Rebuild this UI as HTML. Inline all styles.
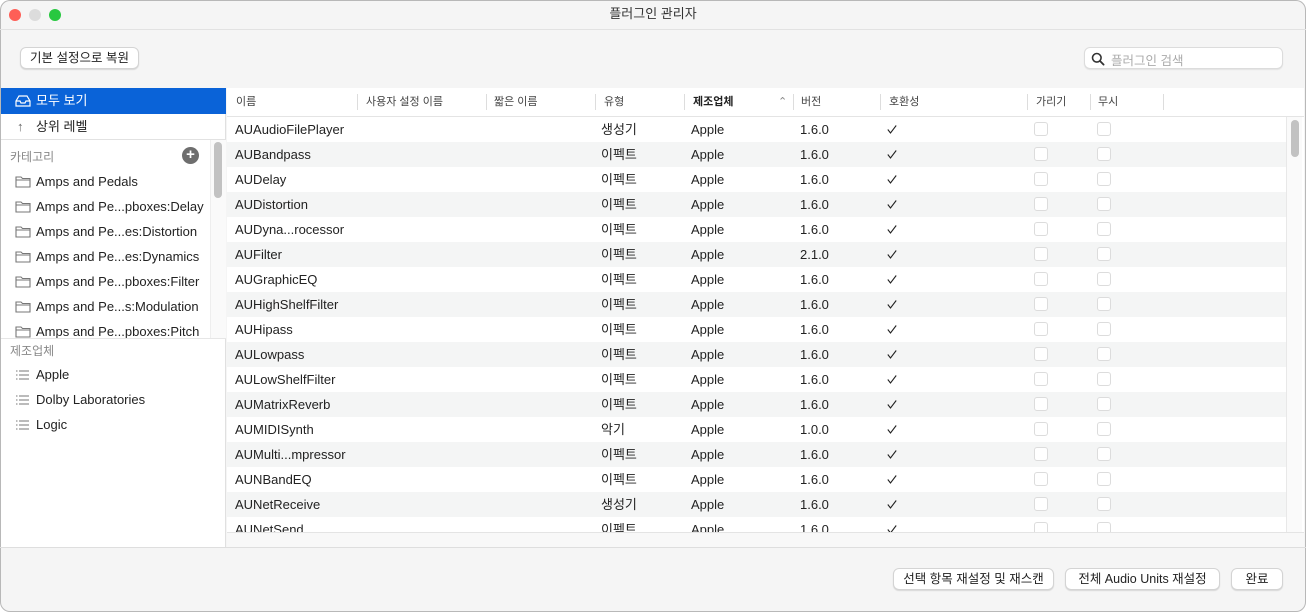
<!DOCTYPE html>
<html><head><meta charset="utf-8"><style>
*{box-sizing:border-box;margin:0;padding:0}
body{width:1306px;height:612px;background:#fff;font-family:"Liberation Sans","Noto Sans CJK KR",sans-serif;font-size:13px;color:#222;overflow:hidden;position:relative}
.win{position:absolute;left:0;top:0;width:1306px;height:612px;box-shadow:inset 0 0 0 1px #b8b8b8;border-radius:10px;background:#f5f5f5;overflow:hidden}
.abs{position:absolute}
.tl{position:absolute;top:9px;width:12px;height:12px;border-radius:50%}
.btn{position:absolute;background:#fff;border:1px solid #d4d4d4;border-radius:6px;box-shadow:0 1px 1px rgba(0,0,0,.12);font-size:12.5px;text-align:center;line-height:20px;height:22px;color:#222}
.side{position:absolute;left:1px;top:88px;width:225px;height:459px;background:#fff;border-right:1px solid #e0e0e0}
.si{position:absolute;left:0;height:25px;line-height:25px;font-size:13px}
.tbl{position:absolute;left:227px;top:88px;width:1077px;height:459px;background:#fff}
.hd{position:absolute;top:0;height:28px;line-height:28px;font-size:11px;color:#444}
.sep{position:absolute;top:6px;width:1px;height:16px;background:#ddd}
.row{position:absolute;left:0;width:1059px;height:25px;line-height:25px}
.row span{position:absolute;top:0}
.row svg{position:absolute;top:8px}
.cb{position:absolute;top:5px;width:14px;height:14px;border:1px solid #dcdcdc;border-radius:3px;background:#fff}
</style></head><body><div class="win">
<div class="tl" style="left:9px;background:#fe5f57"></div>
<div class="tl" style="left:29px;background:#dcdcdc"></div>
<div class="tl" style="left:49px;background:#28c840"></div>
<div class="abs" style="left:0;top:4px;width:1306px;text-align:center;font-size:13px;color:#333;line-height:20px">플러그인 관리자</div>
<div class="abs" style="left:0;top:29px;width:1306px;height:1px;background:#e2e2e2"></div>
<div class="btn" style="left:20px;top:47px;width:119px">기본 설정으로 복원</div>
<div class="abs" style="left:1084px;top:47px;width:199px;height:22px;background:#fff;border:1px solid #dcdcdc;border-radius:6px;box-shadow:0 1px 1px rgba(0,0,0,.08)">
<svg class="abs" style="left:6px;top:4px" width="14" height="14" viewBox="0 0 14 14"><circle cx="5.8" cy="5.8" r="4.3" fill="none" stroke="#333" stroke-width="1.6"/><path d="M9 9l3.6 3.6" stroke="#333" stroke-width="1.8" stroke-linecap="round"/></svg>
<span class="abs" style="left:26px;top:2px;color:#aaa;font-size:12.5px">플러그인 검색</span></div>

<div class="side">
<div class="si" style="top:0;width:225px;height:26px;background:#0a63d8;color:#fff">
<svg class="abs" style="left:14px;top:7px" width="16" height="12" viewBox="0 0 16 12"><path d="M1 6l3-5h8l3 5v5H1z M1 6h4l1 2h4l1-2h4" fill="none" stroke="#fff" stroke-width="1.2"/></svg>
<span class="abs" style="left:35px;top:0">모두 보기</span></div>
<div class="si" style="top:26px;width:225px"><span class="abs" style="left:16px;color:#666">↑</span><span class="abs" style="left:35px">상위 레벨</span></div>
<div class="abs" style="left:0;top:51px;width:225px;height:1px;background:#e2e2e2"></div>
<div class="abs" style="left:209px;top:52px;width:16px;height:198px;background:#fafafa;border-left:1px solid #eee"></div>
<div class="abs" style="left:213px;top:54px;width:8px;height:56px;background:#c2c2c2;border-radius:4px"></div>
<div class="si" style="top:57px;left:9px;color:#888;font-size:12px">카테고리</div>
<div class="abs" style="left:181px;top:59px;width:17px;height:17px;border-radius:50%;background:#6e6e6e;color:#fff;text-align:center;line-height:16px;font-size:15px;font-weight:bold">+</div>
<div style="position:absolute;left:0;top:0;width:209px;height:250px;overflow:hidden">
<div class="si" style="top:81px;left:35px">Amps and Pedals</div>
<div class="si" style="top:106px;left:35px">Amps and Pe...pboxes:Delay</div>
<div class="si" style="top:131px;left:35px">Amps and Pe...es:Distortion</div>
<div class="si" style="top:156px;left:35px">Amps and Pe...es:Dynamics</div>
<div class="si" style="top:181px;left:35px">Amps and Pe...pboxes:Filter</div>
<div class="si" style="top:206px;left:35px">Amps and Pe...s:Modulation</div>
<div class="si" style="top:231px;left:35px">Amps and Pe...pboxes:Pitch</div>
<svg class="abs" style="left:14px;top:87px" width="16" height="180" viewBox="0 0 16 180"><g fill="none" stroke="#777" stroke-width="1.1"><path d="M1 2h5l1.5 1.5H15V12H1z M1 5h14"/><path transform="translate(0,25)" d="M1 2h5l1.5 1.5H15V12H1z M1 5h14"/><path transform="translate(0,50)" d="M1 2h5l1.5 1.5H15V12H1z M1 5h14"/><path transform="translate(0,75)" d="M1 2h5l1.5 1.5H15V12H1z M1 5h14"/><path transform="translate(0,100)" d="M1 2h5l1.5 1.5H15V12H1z M1 5h14"/><path transform="translate(0,125)" d="M1 2h5l1.5 1.5H15V12H1z M1 5h14"/><path transform="translate(0,150)" d="M1 2h5l1.5 1.5H15V12H1z M1 5h14"/></g></svg>
</div>
<div class="abs" style="left:0;top:250px;width:225px;height:1px;background:#e6e6e6"></div>
<div class="si" style="top:251px;left:9px;color:#888;font-size:12px">제조업체</div>
<div class="si" style="top:274px;left:35px">Apple</div>
<div class="si" style="top:299px;left:35px">Dolby Laboratories</div>
<div class="si" style="top:324px;left:35px">Logic</div>
<svg class="abs" style="left:15px;top:281px" width="14" height="70" viewBox="0 0 14 70"><g stroke="#777" stroke-width="1.1"><path d="M3 2h10M3 6h10M3 10h10M0 2h1.5M0 6h1.5M0 10h1.5"/><path transform="translate(0,25)" d="M3 2h10M3 6h10M3 10h10M0 2h1.5M0 6h1.5M0 10h1.5"/><path transform="translate(0,50)" d="M3 2h10M3 6h10M3 10h10M0 2h1.5M0 6h1.5M0 10h1.5"/></g></svg>
</div>

<div class="tbl">
<div class="abs" style="left:0;top:28px;width:1077px;height:1px;background:#e4e4e4"></div>
<div class="hd" style="left:9px">이름</div><div class="sep" style="left:130px"></div>
<div class="hd" style="left:139px">사용자 설정 이름</div><div class="sep" style="left:259px"></div>
<div class="hd" style="left:267px">짧은 이름</div><div class="sep" style="left:368px"></div>
<div class="hd" style="left:377px">유형</div><div class="sep" style="left:457px"></div>
<div class="hd" style="left:466px;font-weight:bold;color:#222">제조업체</div><div class="hd" style="left:551px;color:#888">⌃</div><div class="sep" style="left:566px"></div>
<div class="hd" style="left:574px">버전</div><div class="sep" style="left:653px"></div>
<div class="hd" style="left:662px">호환성</div><div class="sep" style="left:800px"></div>
<div class="hd" style="left:809px">가리기</div><div class="sep" style="left:863px"></div>
<div class="hd" style="left:871px">무시</div><div class="sep" style="left:936px"></div>
<div class="abs" style="left:0;top:29px;width:1059px;height:415px;overflow:hidden" id="rows">
</div>
<div class="abs" style="left:0;top:444px;width:1077px;height:1px;background:#e4e4e4"></div>
<div class="abs" style="left:0;top:445px;width:1077px;height:14px;background:#f8f8f8"></div>
<div class="abs" style="left:1059px;top:29px;width:16px;height:415px;background:#fafafa;border-left:1px solid #e8e8e8"></div>
<div class="abs" style="left:1064px;top:32px;width:8px;height:37px;background:#c2c2c2;border-radius:4px"></div>
</div>
<div class="abs" style="left:0;top:547px;width:1306px;height:1px;background:#dedede"></div>
<div class="btn" style="left:893px;top:568px;width:161px">선택 항목 재설정 및 재스캔</div>
<div class="btn" style="left:1065px;top:568px;width:155px">전체 Audio Units 재설정</div>
<div class="btn" style="left:1231px;top:568px;width:52px">완료</div>
</div>
<script>
var d=[["AUAudioFilePlayer","생성기","1.6.0"],["AUBandpass","이펙트","1.6.0"],["AUDelay","이펙트","1.6.0"],["AUDistortion","이펙트","1.6.0"],["AUDyna...rocessor","이펙트","1.6.0"],["AUFilter","이펙트","2.1.0"],["AUGraphicEQ","이펙트","1.6.0"],["AUHighShelfFilter","이펙트","1.6.0"],["AUHipass","이펙트","1.6.0"],["AULowpass","이펙트","1.6.0"],["AULowShelfFilter","이펙트","1.6.0"],["AUMatrixReverb","이펙트","1.6.0"],["AUMIDISynth","악기","1.0.0"],["AUMulti...mpressor","이펙트","1.6.0"],["AUNBandEQ","이펙트","1.6.0"],["AUNetReceive","생성기","1.6.0"],["AUNetSend","이펙트","1.6.0"]];
var h="";d.forEach(function(r,i){h+='<div class="row" style="top:'+(i*25)+'px;background:'+(i%2?'#f4f5f5':'#fff')+'"><span style="left:8px">'+r[0]+'</span><span style="left:374px">'+r[1]+'</span><span style="left:464px">Apple</span><span style="left:573px">'+r[2]+'</span><svg style="left:660px" width="10" height="9" viewBox="0 0 10 9"><path d="M0.8 4.5L3.5 8L9.2 0.5" fill="none" stroke="#222" stroke-width="1.1"/></svg><div class="cb" style="left:807px"></div><div class="cb" style="left:870px"></div></div>';});
document.getElementById("rows").innerHTML=h;
</script>
</body></html>
